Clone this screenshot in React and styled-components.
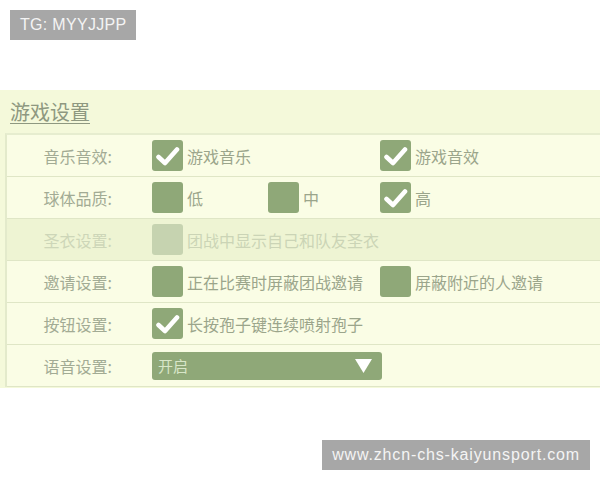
import React from 'react';
import styled, { createGlobalStyle } from 'styled-components';

const GlobalStyle = createGlobalStyle`
  html, body {
    margin: 0;
    padding: 0;
    background: #ffffff;
  }
  body {
    font-family: "Noto Sans CJK SC", "Noto Sans", sans-serif;
  }
`;

const Page = styled.div`
  width: 600px;
  height: 480px;
  display: flex;
  flex-direction: column;
  overflow: hidden;
`;

const Tag = styled.div`
  align-self: ${p => (p.$right ? 'flex-end' : 'flex-start')};
  margin: ${p => (p.$right ? '52px 10px 0 0' : '10px 0 0 10px')};
  height: 30px;
  padding: 0 10px;
  display: flex;
  align-items: center;
  background: #a7a7a7;
  color: #f4f4f4;
  font-family: "Liberation Sans", Arial, sans-serif;
  font-size: 16px;
  letter-spacing: ${p => (p.$right ? '0.85px' : '0.3px')};
`;

const Panel = styled.section`
  margin-top: 50px;
  height: 298px;
  background: #f4f9da;
  display: flex;
  flex-direction: column;
`;

const Title = styled.h2`
  margin: 0;
  padding: 7px 0 0 10px;
  height: 43px;
  box-sizing: border-box;
  font-size: 20px;
  font-weight: 400;
  color: #8e9880;
  text-decoration: underline;
  text-underline-offset: 3px;
  text-decoration-thickness: 1px;
`;

const Table = styled.div`
  margin-left: 5px;
  border-left: 2px solid #e3eacb;
  border-top: 2px solid #e6edcf;
  display: flex;
  flex-direction: column;
`;

const Row = styled.div`
  height: 41px;
  border-bottom: 1px solid #dfe6c6;
  background: ${p => (p.$disabled ? '#eef4d3' : '#fafde5')};
  display: flex;
  align-items: center;
  padding-left: 5px;
`;

const Label = styled.div`
  width: 100px;
  text-align: right;
  font-size: 16px;
  color: ${p => (p.$disabled ? '#cdd6b8' : '#a2ab94')};
  margin-right: 40px;
`;

const Option = styled.div`
  width: ${p => (p.$w ? `${p.$w}px` : 'auto')};
  display: flex;
  align-items: center;
  gap: 4px;
`;

const Box = styled.div`
  width: 31px;
  height: 31px;
  border-radius: 3px;
  background: ${p => (p.$disabled ? '#c6d3b0' : '#8fa878')};
  display: flex;
  align-items: center;
  justify-content: center;
  flex-shrink: 0;
`;

const OptionText = styled.span`
  font-size: 16px;
  color: ${p => (p.$disabled ? '#cbd4b6' : '#9ba58b')};
  white-space: nowrap;
`;

const Select = styled.div`
  width: 230px;
  height: 28px;
  border-radius: 3px;
  background: #8fa878;
  display: flex;
  align-items: center;
  justify-content: space-between;
  padding: 0 10px 0 6px;
  box-sizing: border-box;
  color: #d8e6c8;
  font-size: 15px;
`;

const Check = () => (
  <svg width="25" height="22" viewBox="0 0 25 22">
    <path d="M3.5 12 L10 18 L22 4.5" fill="none" stroke="#ffffff" strokeWidth="4.6" strokeLinecap="round" strokeLinejoin="round" />
  </svg>
);

const Triangle = () => (
  <svg width="17" height="15" viewBox="0 0 17 15">
    <path d="M0 1 L17 1 L8.5 15 Z" fill="#ffffff" />
  </svg>
);

const CheckOption = ({ checked, disabled, text, w }) => (
  <Option $w={w}>
    <Box $disabled={disabled}>{checked && <Check />}</Box>
    <OptionText $disabled={disabled}>{text}</OptionText>
  </Option>
);

const rows = [
  { label: '音乐音效:', options: [{ text: '游戏音乐', checked: true, w: 228 }, { text: '游戏音效', checked: true }] },
  { label: '球体品质:', options: [{ text: '低', w: 116 }, { text: '中', w: 112 }, { text: '高', checked: true }] },
  { label: '圣衣设置:', disabled: true, options: [{ text: '团战中显示自己和队友圣衣' }] },
  { label: '邀请设置:', options: [{ text: '正在比赛时屏蔽团战邀请', w: 228 }, { text: '屏蔽附近的人邀请' }] },
  { label: '按钮设置:', options: [{ text: '长按孢子键连续喷射孢子', checked: true }] },
];

export default function App() {
  return (
    <Page>
      <GlobalStyle />
      <Tag>TG: MYYJJPP</Tag>
      <Panel>
        <Title>游戏设置</Title>
        <Table>
          {rows.map(r => (
            <Row key={r.label} $disabled={r.disabled}>
              <Label $disabled={r.disabled}>{r.label}</Label>
              {r.options.map(o => (
                <CheckOption key={o.text} {...o} disabled={r.disabled} />
              ))}
            </Row>
          ))}
          <Row>
            <Label>语音设置:</Label>
            <Select>
              <span>开启</span>
              <Triangle />
            </Select>
          </Row>
        </Table>
      </Panel>
      <Tag $right>www.zhcn-chs-kaiyunsport.com</Tag>
    </Page>
  );
}
